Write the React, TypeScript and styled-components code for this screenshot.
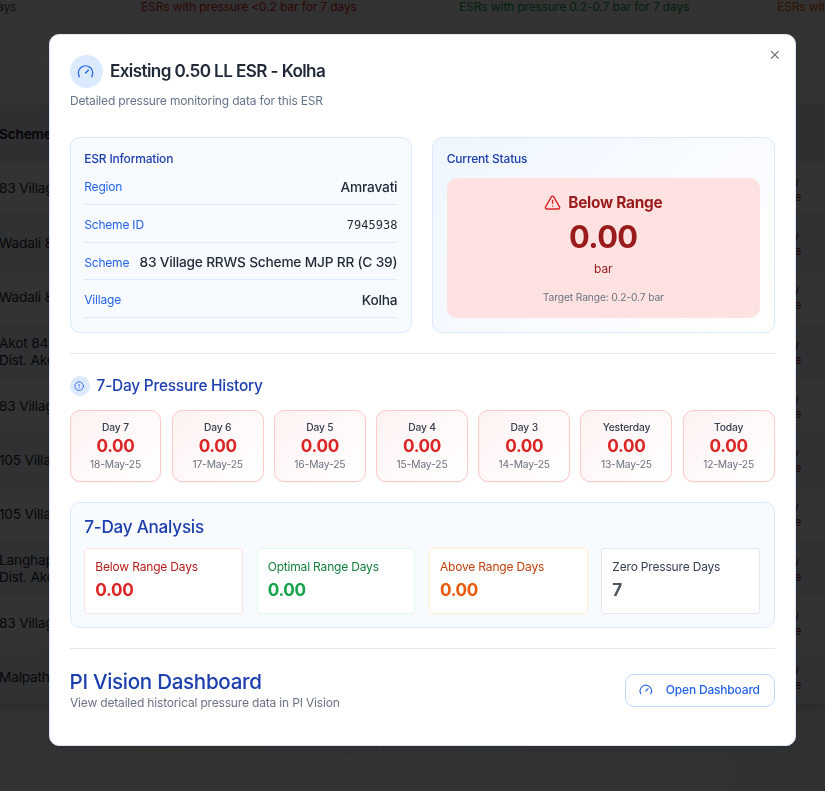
import React from "react";
import styled, { createGlobalStyle } from "styled-components";
import { CircleAlert, Gauge, TriangleAlert, X } from "lucide-react";

const GlobalStyle = createGlobalStyle`
  *, *::before, *::after { box-sizing: border-box; }
  html, body { margin: 0; height: 100%; overflow: hidden; }
  body { font-family: Inter, sans-serif; color: #1f2937; background: #fff; }
  h2, h3, h4, p { margin: 0; }
`;

/* ---------- page behind the dialog ---------- */

const Page = styled.div`
  height: 791px;
  width: 825px;
  overflow: hidden;
  background: linear-gradient(100deg, #f8fdf9 0%, #fdfdfb 50%, #f2f5fa 100%);
`;

const SummaryStrip = styled.div`
  display: grid;
  grid-template-columns: 122px 318px 317px 68px;
  height: 35px;
`;

const SummaryCell = styled.div<{ $color: string; $bg: string; $indent: number }>`
  text-indent: ${(p) => p.$indent}px;
  background: ${(p) => p.$bg};
  color: ${(p) => p.$color};
  font-size: 12px;
  line-height: 14px;
  letter-spacing: -0.12px;
  white-space: nowrap;
  overflow: hidden;
`;

const Table = styled.div`
  margin-top: 70px;
  border-top: 1px solid #e5e7eb;
  box-shadow: 0 3px 6px rgba(0, 0, 0, 0.2);
`;

const TableHead = styled.div`
  display: flex;
  align-items: center;
  height: 56px;
  background: #e4e9f6;
  font-size: 13.7px;
  font-weight: 600;
  letter-spacing: -0.2px;
  text-indent: -1px;
  color: #111827;
`;

const TableRow = styled.div<{ $tinted: boolean }>`
  display: flex;
  justify-content: space-between;
  align-items: center;
  height: 54.3px;
  border-bottom: 1px solid #e3e6eb;
  background: ${(p) => (p.$tinted ? "#eff4fa" : "#fdfdfc")};
  font-size: 13.7px;
  line-height: 16.5px;
  letter-spacing: -0.2px;
  white-space: pre-line;
`;

const RowName = styled.span`
  margin-left: -1px;
`;

const RowStatus = styled.span`
  width: 72px;
  font-size: 12px;
  line-height: 15px;
  color: #991b1b;
`;

const StatusLine = styled.span`
  display: block;
  width: 46px;
  text-align: right;
  &:last-child { width: 48px; }
`;

const Pager = styled.div`
  display: flex;
  align-items: center;
  gap: 3px;
  height: 34px;
  margin: 20px 0 0 276px;
  font-size: 12px;
  color: #1f2937;
`;

const PagerLink = styled.span`
  width: 71px;
  white-space: nowrap;
`;

const PageNumber = styled.span<{ $current?: boolean }>`
  display: grid;
  place-items: center;
  width: 33.7px;
  height: 34px;
  border: ${(p) => (p.$current ? "1px solid #e1e4e8" : "0")};
  border-radius: 7px;
  color: ${(p) => (p.$current ? "#2563eb" : "inherit")};
`;

/* ---------- dialog ---------- */

const Scrim = styled.div`
  position: fixed;
  inset: 0;
  display: flex;
  justify-content: center;
  align-items: flex-start;
  padding-top: 33.6px;
  padding-right: 5px;
  padding-left: 24.1px;
  background: rgba(0, 0, 0, 0.8);
`;

const Dialog = styled.section`
  position: relative;
  width: 747px;
  height: 712px;
  padding: 20px;
  border: 1px solid #dbe7f8;
  border-radius: 10px;
  background: #fff;
  box-shadow: 0 9px 13px -3px rgba(0, 0, 0, 0.1);
  letter-spacing: -0.014em;
`;

const CloseButton = styled.button`
  position: absolute;
  top: 13px;
  right: 13px;
  display: grid;
  place-items: center;
  width: 14px;
  height: 14px;
  padding: 0;
  border: 0;
  background: none;
  color: #6b7280;
`;

const DialogHeader = styled.header`
  height: 82px;
`;

const TitleRow = styled.div`
  display: flex;
  align-items: center;
  gap: 7.4px;
  height: 33px;
`;

const IconDisc = styled.span<{ $size: number }>`
  display: grid;
  place-items: center;
  width: ${(p) => p.$size}px;
  height: ${(p) => p.$size}px;
  border-radius: 50%;
  background: #dbeafe;
  color: #2563eb;
`;

const Title = styled.h2`
  font-size: 17.14px;
  font-weight: 600;
  letter-spacing: -0.6px;
  line-height: 24px;
`;

const Muted = styled.p<{ $color?: string }>`
  padding-left: 0.4px;
  font-size: 12px;
  line-height: 17px;
  letter-spacing: -0.17px;
  color: ${(p) => p.$color ?? "#6b7280"};
`;

const Subtitle = styled(Muted)`
  margin-top: 4px;
`;

const TwoColumns = styled.div`
  display: grid;
  grid-template-columns: 1fr 1fr;
  gap: 20px;
  height: 196px;
`;

const Card = styled.section<{ $gradient?: boolean }>`
  padding: 12.2px 13.7px;
  border: 1px solid #dbeafe;
  border-radius: 10px;
  background: ${(p) =>
    p.$gradient ? "linear-gradient(135deg, #eff6ff, #ffffff)" : "#f7faff"};
`;

const CardHeading = styled.h4`
  font-size: 12px;
  font-weight: 500;
  line-height: 17px;
  letter-spacing: -0.19px;
  color: #1e40af;
`;

const InfoList = styled.div`
  display: grid;
  gap: 3.43px;
  margin-top: 3.8px;
`;

const InfoRow = styled.div`
  display: flex;
  justify-content: space-between;
  align-items: center;
  height: 34.27px;
  padding-bottom: 0.6px;
  border-bottom: 1px solid #dbeafe;
`;

const InfoLabel = styled.span`
  font-size: 12px;
  letter-spacing: -0.2px;
  color: #2563eb;
`;

const InfoValue = styled.span<{ $mono?: boolean }>`
  font-family: ${(p) => (p.$mono ? '"DejaVu Sans Mono", monospace' : "inherit")};
  font-size: ${(p) => (p.$mono ? "12px" : "13.71px")};
  font-weight: ${(p) => (p.$mono ? 400 : 500)};
  letter-spacing: ${(p) => (p.$mono ? "0" : "-0.2px")};
  white-space: nowrap;
`;

const StatusPanel = styled.div`
  display: flex;
  flex-direction: column;
  align-items: center;
  height: 140px;
  margin-top: 10.8px;
  padding-top: 13.4px;
  border-radius: 10px;
  background: #fee2e2;
  color: #991b1b;
`;

const StatusTitle = styled.div`
  display: flex;
  align-items: center;
  gap: 7px;
  font-size: 15.43px;
  font-weight: 700;
  letter-spacing: -0.25px;
  line-height: 24px;
  svg { color: #dc2626; }
`;

const StatusValue = styled.div`
  margin-top: 5px;
  font-size: 30.86px;
  font-weight: 700;
  letter-spacing: -0.6px;
  line-height: 34px;
`;

const StatusUnit = styled.div`
  margin-top: 6px;
  font-size: 12px;
  letter-spacing: -0.1px;
  line-height: 17px;
`;

const StatusTarget = styled.div`
  margin-top: 13px;
  font-size: 10.29px;
  letter-spacing: -0.14px;
  line-height: 14px;
  color: #6b7280;
`;

const Divider = styled.hr`
  height: 1px;
  margin: 20px 0;
  border: 0;
  background: #e5e7eb;
`;

const SectionTitle = styled.div`
  display: flex;
  align-items: center;
  gap: 7px;
  height: 21px;
  margin-top: 22px;
`;

const SectionHeading = styled.h3<{ $size: number }>`
  font-size: ${(p) => p.$size}px;
  font-weight: 500;
  line-height: 24px;
  letter-spacing: -0.0145em;
  color: #1e40af;
`;

const DayGrid = styled.div`
  display: grid;
  grid-template-columns: repeat(7, 1fr);
  gap: 10.29px;
  height: 72px;
  margin-top: 13px;
`;

const DayCard = styled.article`
  display: flex;
  flex-direction: column;
  align-items: center;
  padding-top: 9.4px;
  border: 1px solid #fecaca;
  border-radius: 10px;
  background: linear-gradient(135deg, #fef2f2, #ffffff);
  box-shadow: 0 1px 2px rgba(0, 0, 0, 0.06);
`;

const DayName = styled.span`
  font-size: 10.29px;
  font-weight: 500;
  line-height: 14px;
  letter-spacing: -0.16px;
  color: #374151;
`;

const DayValue = styled.span`
  font-size: 17.14px;
  font-weight: 700;
  line-height: 24px;
  letter-spacing: -0.32px;
  color: #dc2626;
`;

const DayDate = styled.span`
  font-size: 10.29px;
  line-height: 13px;
  letter-spacing: -0.16px;
  color: #6b7280;
`;

const AnalysisCard = styled(Card)`
  height: 126px;
  margin-top: 20px;
  padding-top: 12.4px;
`;

const StatGrid = styled.div`
  display: grid;
  grid-template-columns: repeat(4, 1fr);
  gap: 13.71px;
  height: 66px;
  margin-top: 8.6px;
`;

const StatBox = styled.div<{ $border: string }>`
  padding: 9.2px 10.1px;
  border: 1px solid ${(p) => p.$border};
  border-radius: 3px;
  background: #fff;
`;

const StatLabel = styled.div<{ $color: string }>`
  font-size: 12px;
  line-height: 17px;
  letter-spacing: -0.18px;
  color: ${(p) => p.$color};
`;

const StatValue = styled.div<{ $color: string }>`
  margin-top: 3px;
  font-size: 17.14px;
  font-weight: 700;
  line-height: 24px;
  letter-spacing: -0.32px;
  color: ${(p) => p.$color};
`;

const Footer = styled.footer`
  display: flex;
  justify-content: space-between;
  align-items: center;
  height: 43px;
`;

const OpenButton = styled.button`
  display: flex;
  align-items: center;
  gap: 12.7px;
  height: 33px;
  padding: 0 13.7px 1px;
  border: 1px solid #bfdbfe;
  border-radius: 9px;
  background: #fff;
  color: #2563eb;
  font: 500 12px Inter, sans-serif;
  letter-spacing: -0.19px;
  svg { position: relative; top: 0.5px; }
`;

const tableRows = [
  "83 Village",
  "Wadali &",
  "Wadali &",
  "Akot 84\nDist. Ako",
  "83 Village",
  "105 Villa",
  "105 Villa",
  "Langhap\nDist. Ako",
  "83 Village",
  "Malpath",
];

const info = [
  { label: "Region", value: "Amravati" },
  { label: "Scheme ID", value: "7945938", mono: true },
  { label: "Scheme", value: "83 Village RRWS Scheme MJP RR (C 39)" },
  { label: "Village", value: "Kolha" },
];

const days = [
  ["Day 7", "18-May-25"],
  ["Day 6", "17-May-25"],
  ["Day 5", "16-May-25"],
  ["Day 4", "15-May-25"],
  ["Day 3", "14-May-25"],
  ["Yesterday", "13-May-25"],
  ["Today", "12-May-25"],
];

const stats = [
  { label: "Below Range Days", value: "0.00", border: "#fee2e2", text: "#b91c1c", number: "#dc2626" },
  { label: "Optimal Range Days", value: "0.00", border: "#dcfce7", text: "#15803d", number: "#16a34a" },
  { label: "Above Range Days", value: "0.00", border: "#ffedd5", text: "#c2410c", number: "#ea580c" },
  { label: "Zero Pressure Days", value: "7", border: "#e5e7eb", text: "#374151", number: "#4b5563" },
];

function Backdrop() {
  return (
    <Page aria-hidden="true">
      <SummaryStrip>
        <SummaryCell $color="#4b5563" $bg="#fbfdfb" $indent={-3}>ays</SummaryCell>
        <SummaryCell $color="#dc2626" $bg="#fdfafa" $indent={19}>ESRs with pressure &lt;0.2 bar for 7 days</SummaryCell>
        <SummaryCell $color="#16a34a" $bg="#f9fcfa" $indent={19}>ESRs with pressure 0.2-0.7 bar for 7 days</SummaryCell>
        <SummaryCell $color="#ea580c" $bg="#fdf8f1" $indent={20}>ESRs with</SummaryCell>
      </SummaryStrip>
      <Table>
        <TableHead>Scheme</TableHead>
        {tableRows.map((name, i) => (
          <TableRow key={i} $tinted={i % 2 === 1}>
            <RowName>{name}</RowName>
            <RowStatus>
              <StatusLine>Below</StatusLine>
              <StatusLine>Range</StatusLine>
            </RowStatus>
          </TableRow>
        ))}
      </Table>
      <Pager>
        <PagerLink>‹ Previous</PagerLink>
        <PageNumber $current>1</PageNumber>
        <PageNumber>2</PageNumber>
        <PageNumber>3</PageNumber>
        <PageNumber>4</PageNumber>
        <PageNumber>5</PageNumber>
        <PagerLink>&nbsp;&nbsp;&nbsp;&nbsp;Next ›</PagerLink>
      </Pager>
    </Page>
  );
}

export default function App() {
  return (
    <>
      <GlobalStyle />
      <Backdrop />
      <Scrim>
        <Dialog role="dialog" aria-label="Existing 0.50 LL ESR - Kolha">
          <CloseButton aria-label="Close"><X size={13.7} /></CloseButton>
          <DialogHeader>
            <TitleRow>
              <IconDisc $size={33}><Gauge size={17.14} /></IconDisc>
              <Title>Existing 0.50 LL ESR - Kolha</Title>
            </TitleRow>
            <Subtitle $color="#64748b">Detailed pressure monitoring data for this ESR</Subtitle>
          </DialogHeader>

          <TwoColumns>
            <Card>
              <CardHeading>ESR Information</CardHeading>
              <InfoList>
                {info.map((row) => (
                  <InfoRow key={row.label}>
                    <InfoLabel>{row.label}</InfoLabel>
                    <InfoValue $mono={row.mono}>{row.value}</InfoValue>
                  </InfoRow>
                ))}
              </InfoList>
            </Card>
            <Card $gradient>
              <CardHeading>Current Status</CardHeading>
              <StatusPanel>
                <StatusTitle><TriangleAlert size={17.14} />Below Range</StatusTitle>
                <StatusValue>0.00</StatusValue>
                <StatusUnit>bar</StatusUnit>
                <StatusTarget>Target Range: 0.2-0.7 bar</StatusTarget>
              </StatusPanel>
            </Card>
          </TwoColumns>

          <Divider />

          <SectionTitle>
            <IconDisc $size={20}><CircleAlert size={10.3} /></IconDisc>
            <SectionHeading $size={15.43}>7-Day Pressure History</SectionHeading>
          </SectionTitle>
          <DayGrid>
            {days.map(([name, date]) => (
              <DayCard key={name}>
                <DayName>{name}</DayName>
                <DayValue>0.00</DayValue>
                <DayDate>{date}</DayDate>
              </DayCard>
            ))}
          </DayGrid>

          <AnalysisCard>
            <SectionHeading $size={17.14}>7-Day Analysis</SectionHeading>
            <StatGrid>
              {stats.map((s) => (
                <StatBox key={s.label} $border={s.border}>
                  <StatLabel $color={s.text}>{s.label}</StatLabel>
                  <StatValue $color={s.number}>{s.value}</StatValue>
                </StatBox>
              ))}
            </StatGrid>
          </AnalysisCard>

          <Divider />

          <Footer>
            <div>
              <SectionHeading $size={20.57}>PI Vision Dashboard</SectionHeading>
              <Muted>View detailed historical pressure data in PI Vision</Muted>
            </div>
            <OpenButton><Gauge size={13.7} />Open Dashboard</OpenButton>
          </Footer>
        </Dialog>
      </Scrim>
    </>
  );
}
